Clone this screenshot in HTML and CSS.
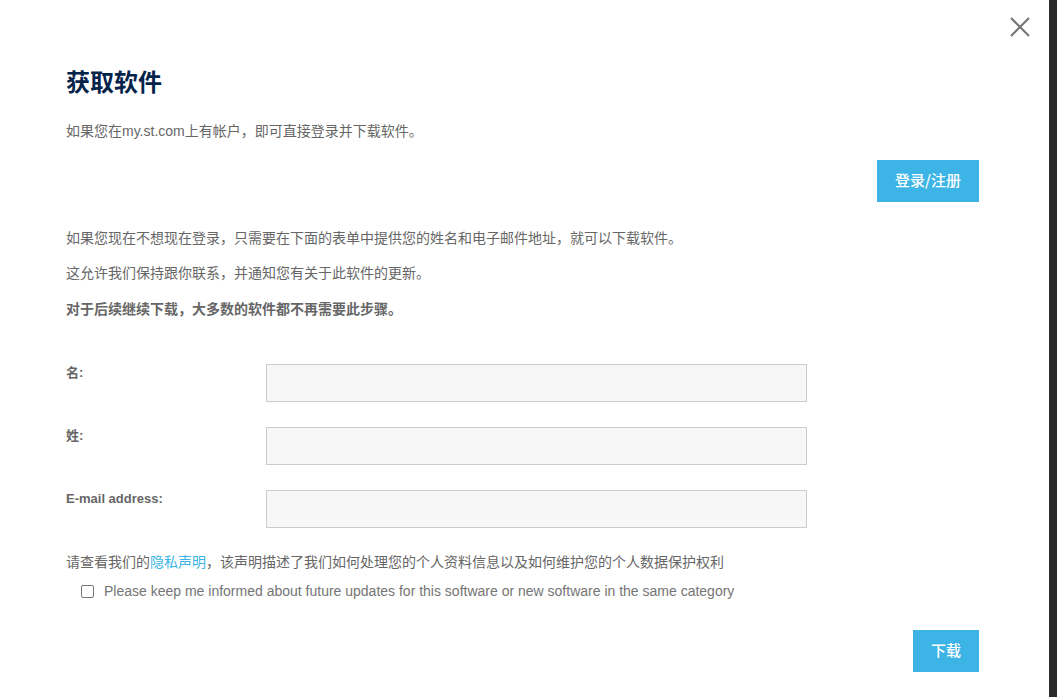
FILE: index.html
```html
<!DOCTYPE html>
<html lang="zh">
<head>
<meta charset="utf-8">
<title>获取软件</title>
<link rel="stylesheet" href="styles.css">
</head>
<body>
<div class="page">
  <div class="modal">
    <button class="close" aria-label="关闭">
      <svg width="22" height="22" viewBox="0 0 22 22"><path d="M2 2 L20 20 M20 2 L2 20" stroke="#737373" stroke-width="2" fill="none"/></svg>
    </button>
    <h1 class="title">获取软件</h1>
    <p class="text p-first">如果您在my.st.com上有帐户，即可直接登录并下载软件。</p>
    <div class="btn-row login-row"><a class="btn btn-login">登录/注册</a></div>
    <p class="text p2">如果您现在不想现在登录，只需要在下面的表单中提供您的姓名和电子邮件地址，就可以下载软件。</p>
    <p class="text p3">这允许我们保持跟你联系，并通知您有关于此软件的更新。</p>
    <p class="text p4 strong">对于后续继续下载，大多数的软件都不再需要此步骤。</p>
    <form class="form">
      <label class="label" for="fn">名:</label>
      <input class="input" id="fn" type="text">
      <label class="label" for="ln">姓:</label>
      <input class="input" id="ln" type="text">
      <label class="label" for="em">E-mail address:</label>
      <input class="input" id="em" type="text">
    </form>
    <p class="text privacy">请查看我们的<a class="link">隐私声明</a>，该声明描述了我们如何处理您的个人资料信息以及如何维护您的个人数据保护权利</p>
    <label class="check-row"><span class="checkbox"></span><span class="check-text">Please keep me informed about future updates for this software or new software in the same category</span></label>
    <div class="btn-row download-row"><a class="btn btn-download">下载</a></div>
  </div>
  <div class="edge"></div>
</div>
</body>
</html>
```

FILE: styles.css
```css
html, body {
  margin: 0;
  padding: 0;
  background: #fff;
}
body {
  font-family: "Liberation Sans", Arial, "Noto Sans CJK SC", sans-serif;
  color: #666;
}
.page {
  display: flex;
  width: 1057px;
  height: 697px;
  overflow: hidden;
}
.modal {
  position: relative;
  flex: 0 0 1049px;
  box-sizing: border-box;
  padding: 65px 70px 0 66px;
  background: #fff;
}
.edge {
  flex: 0 0 8px;
  background: #2b2b2b;
}
.close {
  position: absolute;
  top: 16px;
  right: 18px;
  width: 22px;
  height: 22px;
  padding: 0;
  border: 0;
  background: none;
  line-height: 0;
}
.title {
  margin: 0;
  font-family: "Noto Sans CJK SC", sans-serif;
  font-size: 24px;
  line-height: 32px;
  font-weight: 700;
  color: #03234b;
}
.text {
  margin: 0;
  font-size: 14px;
  line-height: 20px;
  color: #666;
}
.strong { font-weight: 700; }
.p-first { margin-top: 24px; }
.btn-row {
  display: flex;
  justify-content: flex-end;
}
.login-row { margin-top: 19px; }
.btn {
  display: flex;
  align-items: center;
  justify-content: center;
  box-sizing: border-box;
  height: 42px;
  padding-bottom: 3px;
  background: #3cb4e6;
  color: #fff;
  font-family: "Noto Sans CJK SC", sans-serif;
  font-size: 15px;
  font-weight: 500;
}
.btn-login { width: 102px; }
.btn-download { width: 66px; }
.p2 { margin-top: 26px; }
.p3 { margin-top: 15px; }
.p4 { margin-top: 16px; }
.form {
  display: grid;
  grid-template-columns: 200px 541px;
  row-gap: 25px;
  margin-top: 45px;
}
.label {
  font-size: 13px;
  line-height: 18px;
  color: #666;
  font-weight: 700;
}
.input {
  box-sizing: border-box;
  width: 541px;
  height: 38px;
  margin: 0;
  border: 1px solid #ccc;
  background: #f7f7f7;
  outline: none;
}
.privacy { margin-top: 24px; }
.link { color: #3cb4e6; }
.check-row {
  display: flex;
  align-items: center;
  margin: 9px 0 0 15px;
  height: 20px;
}
.checkbox {
  box-sizing: border-box;
  width: 13px;
  height: 13px;
  border: 1px solid #767676;
  border-radius: 2px;
  background: #fff;
}
.check-text {
  margin-left: 10px;
  font-size: 14px;
  color: #757575;
}
.download-row { margin-top: 29px; }
```
